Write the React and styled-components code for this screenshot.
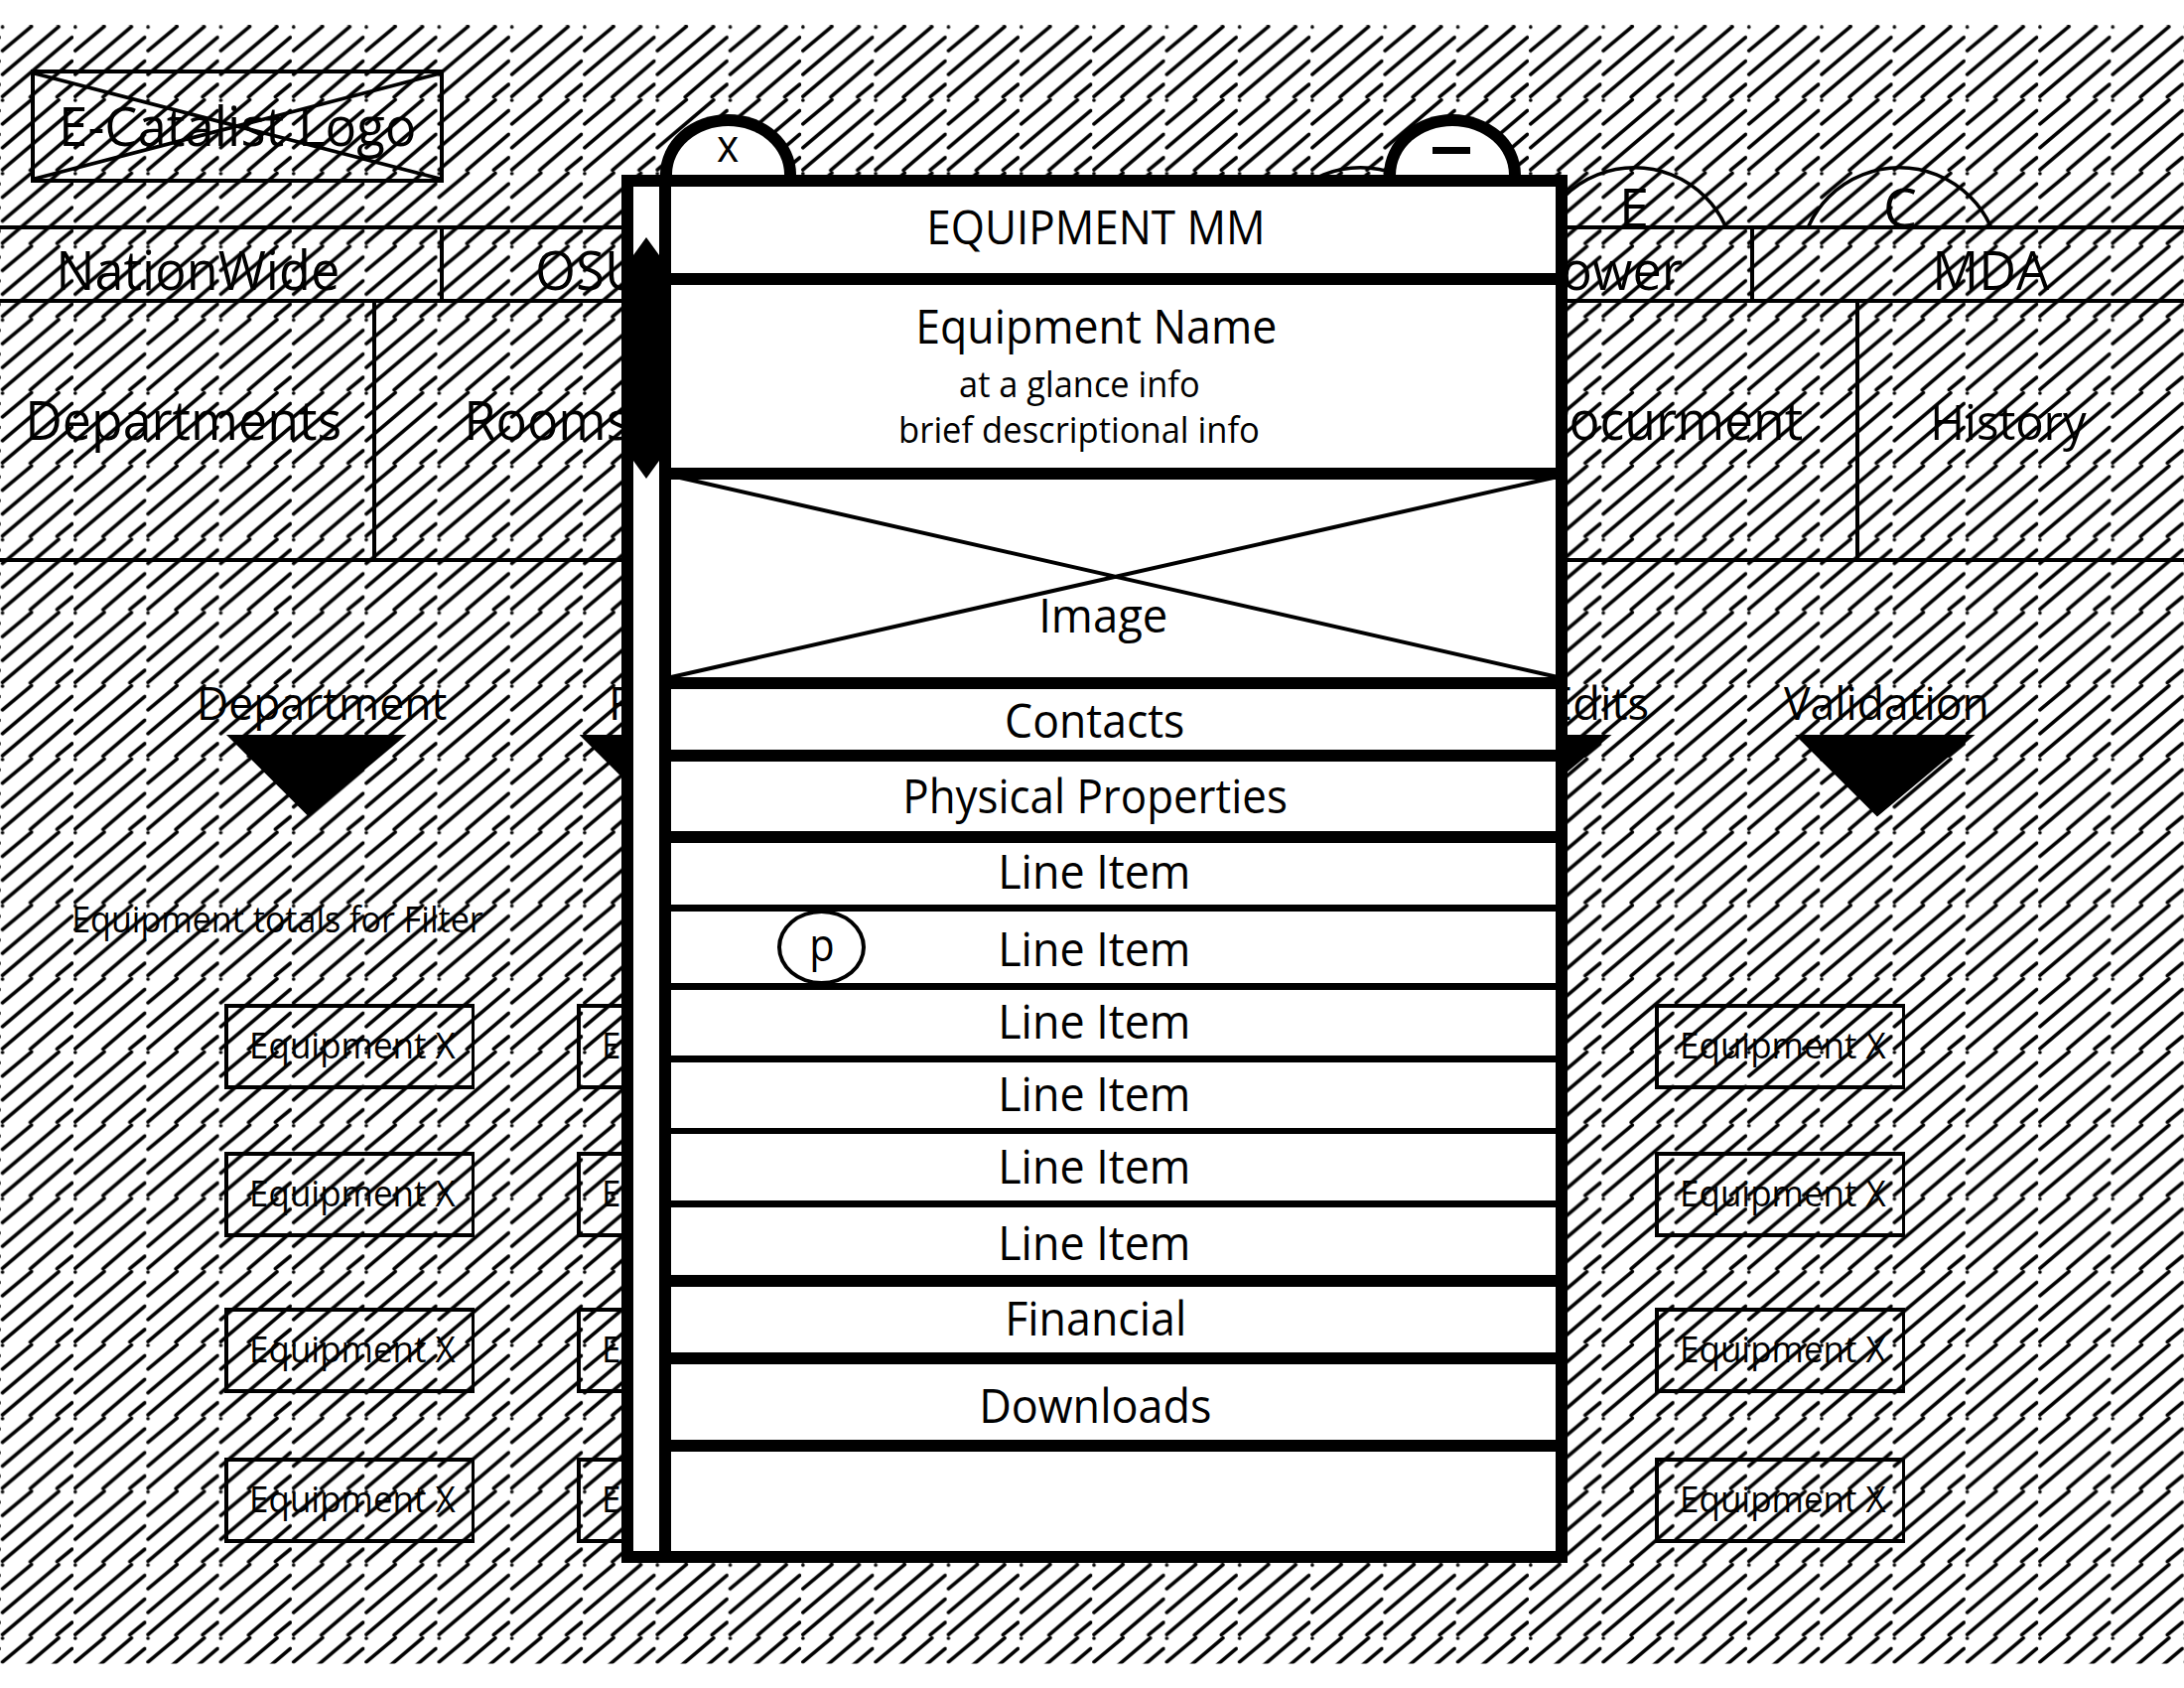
import React from 'react';
import styled, { createGlobalStyle } from 'styled-components';

const FONT = '"Open Sans", "Noto Sans", sans-serif';

const GlobalStyle = createGlobalStyle`
  *, *::before, *::after {
    box-sizing: border-box;
  }

  body {
    margin: 0;
    background: #fff;
    color: #000;
    font-family: ${FONT};
  }
`;

const Page = styled.div`
  position: relative;
  width: 2200px;
  height: 1700px;
  overflow: hidden;
  background: #fff;
`;

/* ---------- text ---------- */

// $base is the distance from the top of the block to the baseline
const TextBlock = styled.div`
  width: ${({ $width }) => $width}px;
  height: ${({ $height }) => ($height ? `${$height}px` : 'auto')};
  margin-left: ${({ $indent }) => $indent || 0}px;
  flex-shrink: 0;
  font-size: ${({ $size }) => $size}px;
  line-height: ${({ $base, $size }) => 2 * ($base + 1.7 - $size * 0.388)}px;
  white-space: nowrap;
`;

const Fitted = styled.span`
  display: inline-block;
  transform-origin: 0 50%;
`;

const ctx = document.createElement('canvas').getContext('2d');

// Squeezes the text so that its ink fills exactly the given width
const fitTransform = (text, size, width) => {
  ctx.font = `${size}px ${FONT}`;
  const m = ctx.measureText(text);
  const left = -m.actualBoundingBoxLeft;
  const scale = width / (m.actualBoundingBoxRight - left);
  return `translateX(${-left * scale}px) scaleX(${scale})`;
};

const Label = ({ children, size, width, base, indent, height }) => (
  <TextBlock
    $size={size}
    $width={width}
    $base={base}
    $indent={indent}
    $height={height}
  >
    <Fitted style={{ transform: fitTransform(children, size, width) }}>
      {children}
    </Fitted>
  </TextBlock>
);

/* ---------- hatching ---------- */

const HatchLayer = styled.svg`
  position: absolute;
  left: 0;
  top: 25px;
  pointer-events: none;
`;

const Hatch = () => (
  <HatchLayer width="2200" height="1650.5">
    <defs>
      <pattern
        id="hatch"
        patternUnits="userSpaceOnUse"
        x="0.7"
        y="0.3"
        width="73.3"
        height="73.76"
      >
        <path
          d="M1.8 2h.1M1.8 25.7L31 1.4M1.8 49.7L58.4 1.6M1.8 71.9L71.8 12.3M29.8 72.4L71.8 36.2M56.8 72.2L71.8 59.8"
          fill="none"
          stroke="#000"
          strokeWidth="3.6"
          strokeLinecap="round"
        />
      </pattern>
    </defs>
    <rect width="2200" height="1650.5" fill="url(#hatch)" />
  </HatchLayer>
);

/* ---------- background page ---------- */

const Header = styled.header`
  display: flex;
  height: 227px;
`;

const Logo = styled.div`
  position: relative;
  width: 416px;
  height: 114px;
  margin: 70px 0 0 31px;
  border: 4px solid #000;
  flex-shrink: 0;
`;

const Cross = styled.svg`
  position: absolute;
  left: 0;
  top: 0;
  overflow: visible;
`;

const RoundTabs = styled.div`
  display: grid;
  grid-template-columns: 275.5px 267px 205px;
  margin: 167px 0 0 821px;
`;

const RoundTab = styled.div`
  position: relative;
  width: 205px;
  height: 60px;
`;

const Arc = styled.svg`
  position: absolute;
  left: 0;
  top: 0;
`;

const Nav = styled.nav`
  display: grid;
  grid-template-columns: ${({ $columns }) => $columns};
  grid-auto-rows: minmax(0, 1fr);
  height: ${({ $height }) => $height}px;
  border-bottom: 4px solid #000;
`;

const SiteNav = styled(Nav)`
  border-top: 4px solid #000;
`;

const NavCell = styled.div`
  border-right: 4px solid #000;

  &:last-child {
    border-right: 0;
  }
`;

const Filters = styled.section`
  display: grid;
  grid-template-columns: 381px 859px 355px 1fr;
  padding: 100px 0 0 202px;
`;

const Arrow = styled.div`
  width: 181.5px;
  height: 82.5px;
  margin-left: ${({ $indent }) => $indent}px;
  background: #000;
  clip-path: polygon(0 0, 100% 0, 45.7% 100%);
`;

const CardGrid = styled.section`
  display: grid;
  grid-template-columns: 355px 1086px 253px;
  grid-template-rows: 149px 157px 151px 86px;
  padding-left: 226px;
`;

const Card = styled.div`
  width: 252px;
  height: 86px;
  border: 4px solid #000;
  border-right-width: 3px;
`;

/* ---------- popup ---------- */

const Popup = styled.div`
  position: absolute;
  left: 626px;
  top: 115px;
  width: 953px;
`;

const TabBar = styled.div`
  display: flex;
  justify-content: space-between;
  height: 61px;
  padding: 0 47.5px 0 38.5px;
`;

const PopupTab = styled.div`
  width: 137.5px;
  height: 61px;
  border: 12px solid #000;
  border-bottom: 0;
  border-radius: 69px 69px 0 0 / 61px 61px 0 0;
  background: #fff;
`;

const Minus = styled.div`
  width: 38px;
  height: 7px;
  margin: 21px 0 0 37px;
  background: #000;
`;

const Frame = styled.div`
  display: flex;
  height: 1398px;
  border: 12px solid #000;
  background: #fff;
`;

const Rail = styled.div`
  width: 38px;
  padding-top: 51px;
  border-right: 12px solid #000;
  flex-shrink: 0;
`;

const Thumb = styled.div`
  height: 243px;
  background: #000;
  clip-path: polygon(
    50% 0,
    100% 18px,
    100% 225px,
    50% 100%,
    0 225px,
    0 18px
  );
`;

const Rows = styled.div`
  flex: 1;
`;

const Row = styled.div`
  position: relative;
  display: ${({ $stacked }) => ($stacked ? 'block' : 'flex')};
  height: ${({ $height, $rule }) => $height + $rule}px;
  border-bottom: ${({ $rule }) => $rule}px solid #000;
`;

const Pin = styled.div`
  position: absolute;
  left: 107px;
  top: -2px;
  width: 89px;
  height: 76px;
  border: 4px solid #000;
  border-radius: 50%;
`;

const filters = [
  { name: 'Department', width: 248, indent: 0, arrow: 26 },
  { name: 'Room', width: 116, indent: 34, arrow: 0.5 },
  { name: 'Edits', width: 96.5, indent: 121, arrow: 0 },
  { name: 'Validation', width: 204, indent: 0, arrow: 11 },
];

const roundTabs = [
  {},
  { letter: 'E', width: 22, indent: 92.5 },
  { letter: 'C', width: 30, indent: 89.5 },
];

const lineItems = [
  { height: 62, rule: 7, base: 44.7 },
  { height: 72, rule: 7, base: 53.7, pin: true },
  { height: 66, rule: 7, base: 47.7 },
  { height: 66, rule: 6, base: 47.7 },
  { height: 67, rule: 7, base: 48.7 },
  { height: 68, rule: 12, base: 51.7 },
];

const cards = Array.from({ length: 12 }, (_, i) => i);

const Background = () => (
  <>
    <Header>
      <Logo>
        <Label size={54} width={353} base={71.3} indent={28.5}>
          E-Catalist Logo
        </Label>
        <Cross width="408" height="106">
          <path
            d="M0 0L408 106M0 106L408 0"
            stroke="#000"
            strokeWidth="3.8"
          />
        </Cross>
      </Logo>
      <RoundTabs>
        {roundTabs.map((tab, i) => (
          <RoundTab key={i}>
            <Arc width="205" height="60">
              <circle
                cx="102.5"
                cy="102.5"
                r="100.7"
                fill="none"
                stroke="#000"
                strokeWidth="3.6"
              />
            </Arc>
            {tab.letter && (
              <Label
                size={54}
                width={tab.width}
                base={60.3}
                indent={tab.indent}
              >
                {tab.letter}
              </Label>
            )}
          </RoundTab>
        ))}
      </RoundTabs>
    </Header>

    <SiteNav $columns="447px 440px 440px 440px 433px" $height={78}>
      <NavCell>
        <Label size={54} width={279} base={60} indent={60.5}>
          NationWide
        </Label>
      </NavCell>
      <NavCell>
        <Label size={54} width={101} base={60} indent={95}>
          OSU
        </Label>
      </NavCell>
      <NavCell />
      <NavCell>
        <Label size={54} width={149} base={60} indent={219}>
          Power
        </Label>
      </NavCell>
      <NavCell>
        <Label size={54} width={114} base={60} indent={183.5}>
          MDA
        </Label>
      </NavCell>
    </SiteNav>

    <Nav $columns="379px 747px 747px 327px" $height={261}>
      <NavCell>
        <Label size={54} width={312.5} base={137} indent={29.5}>
          Departments
        </Label>
      </NavCell>
      <NavCell>
        <Label size={54} width={162} base={137} indent={93}>
          Rooms
        </Label>
      </NavCell>
      <NavCell>
        <Label size={54} width={283} base={137} indent={407}>
          Procurment
        </Label>
      </NavCell>
      <NavCell>
        <Label size={49} width={154} base={137} indent={75}>
          History
        </Label>
      </NavCell>
    </Nav>

    <Filters>
      {filters.map((filter) => (
        <div key={filter.name}>
          <Label
            size={45.5}
            width={filter.width}
            base={57.3}
            indent={filter.indent}
            height={74}
          >
            {filter.name}
          </Label>
          <Arrow $indent={filter.arrow} />
        </div>
      ))}
    </Filters>

    <Label size={36} width={412} base={115} indent={74.6} height={188.5}>
      Equipment totals for Filter
    </Label>

    <CardGrid>
      {cards.map((card) => (
        <Card key={card}>
          <Label size={36} width={205} base={50.2} indent={23.6}>
            Equipment X
          </Label>
        </Card>
      ))}
    </CardGrid>
  </>
);

const EquipmentPopup = () => (
  <Popup>
    <TabBar>
      <PopupTab>
        <Label size={45.5} width={21.5} base={34.7} indent={45.7}>
          x
        </Label>
      </PopupTab>
      <PopupTab>
        <Minus />
      </PopupTab>
    </TabBar>

    <Frame>
      <Rail>
        <Thumb />
      </Rail>
      <Rows>
        <Row $height={87} $rule={12}>
          <Label size={47} width={333.5} base={56.7} indent={261}>
            EQUIPMENT MM
          </Label>
        </Row>

        <Row $height={184} $rule={12} $stacked>
          <Label size={47} width={358} base={57.7} indent={249.7} height={76}>
            Equipment Name
          </Label>
          <Label size={36} width={240} base={36.7} indent={291} height={46}>
            at a glance info
          </Label>
          <Label size={36} width={359.3} base={36.7} indent={232}>
            brief descriptional info
          </Label>
        </Row>

        <Row $height={199} $rule={12}>
          <Cross width="891" height="199">
            <path
              d="M0 -4L891 198.5M0 199L891 -2.5"
              stroke="#000"
              strokeWidth="4"
            />
          </Cross>
          <Label size={47} width={124} base={153} indent={373.7}>
            Image
          </Label>
        </Row>

        <Row $height={61} $rule={12}>
          <Label size={47} width={178} base={48} indent={338}>
            Contacts
          </Label>
        </Row>
        <Row $height={70} $rule={12}>
          <Label size={47} width={382.5} base={51.3} indent={236.5}>
            Physical Properties
          </Label>
        </Row>

        {lineItems.map((item, i) => (
          <Row key={i} $height={item.height} $rule={item.rule}>
            {item.pin && (
              <Pin>
                <Label size={45.5} width={21} base={46} indent={30.5}>
                  p
                </Label>
              </Pin>
            )}
            <Label size={47} width={187} base={item.base} indent={333.3}>
              Line Item
            </Label>
          </Row>
        ))}

        <Row $height={66} $rule={12}>
          <Label size={47} width={175.6} base={47.7} indent={339.7}>
            Financial
          </Label>
        </Row>
        <Row $height={76} $rule={12}>
          <Label size={47} width={229} base={57.7} indent={314.3}>
            Downloads
          </Label>
        </Row>
      </Rows>
    </Frame>
  </Popup>
);

const App = () => (
  <Page>
    <GlobalStyle />
    <Background />
    <Hatch />
    <EquipmentPopup />
  </Page>
);

export default App;
